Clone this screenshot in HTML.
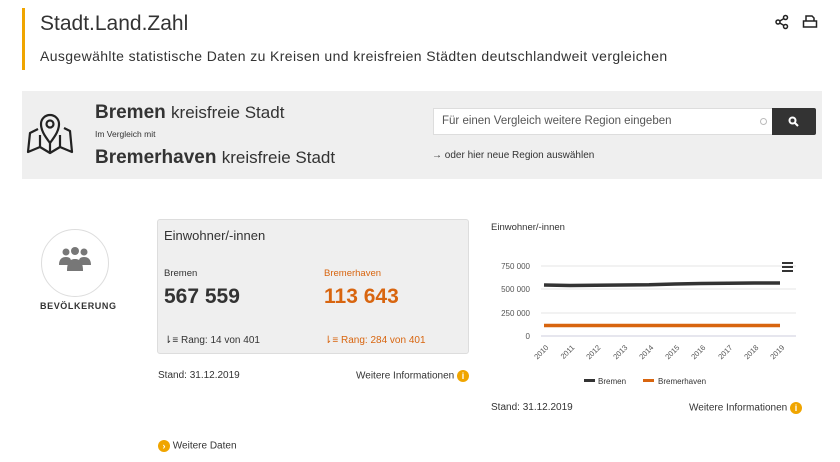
<!DOCTYPE html>
<html><head><meta charset="utf-8"><style>
*{margin:0;padding:0;box-sizing:border-box}
body{width:840px;height:462px;background:#fff;font-family:"Liberation Sans",sans-serif;color:#333;position:relative;overflow:hidden}
.a{position:absolute;white-space:nowrap}
.or{color:#d8650f}
.ic{display:inline-block;width:12px;height:12px;border-radius:50%;background:#f0a500;color:#fff;font-size:9px;font-weight:bold;text-align:center;line-height:12px;vertical-align:middle}
</style></head><body>
<div class="a" style="left:22px;top:8px;width:3px;height:62px;background:#f0a500"></div>
<div class="a" style="left:40px;top:12px;font-size:21px;color:#333">Stadt.Land.Zahl</div>
<div class="a" style="left:40px;top:48px;font-size:14px;color:#333;letter-spacing:0.38px">Ausgewählte statistische Daten zu Kreisen und kreisfreien Städten deutschlandweit vergleichen</div>
<svg class="a" style="left:774px;top:14px" width="16" height="16" viewBox="0 0 16 16" fill="none" stroke="#222" stroke-width="1.5"><circle cx="11.5" cy="3.5" r="2"/><circle cx="4" cy="8" r="2"/><circle cx="11.5" cy="12.5" r="2"/><path d="M5.8 7l4-2.4M5.8 9l4 2.4"/></svg>
<svg class="a" style="left:802px;top:14px" width="16" height="16" viewBox="0 0 16 16" fill="none" stroke="#222" stroke-width="1.5"><path d="M4 7V2h6l2 2v3M1.5 7h13v6h-13z"/></svg>

<div class="a" style="left:22px;top:91px;width:800px;height:88px;background:#efefef"></div>
<svg class="a" style="left:26px;top:111px" width="50" height="46" viewBox="0 0 50 46" fill="none" stroke="#222" stroke-width="2.2" stroke-linejoin="round"><path d="M12 18L4 22 2 41 14 36 24 42 34 36 46 41 44 20 38 17"/><path d="M14 36V24M34 36V24M24 42V30"/><path d="M24 32C18 24 15 19 15 13a9 9 0 0118 0c0 6-3 11-9 19z"/><circle cx="24" cy="13" r="3.5"/></svg>
<div class="a" style="left:95px;top:102px;font-size:19px;color:#333"><b>Bremen</b> <span style="font-size:17px">kreisfreie Stadt</span></div>
<div class="a" style="left:95px;top:129px;font-size:8.5px">Im Vergleich mit</div>
<div class="a" style="left:95px;top:147px;font-size:19px;color:#333"><b>Bremerhaven</b> <span style="font-size:17px">kreisfreie Stadt</span></div>
<div class="a" style="left:433px;top:108px;width:340px;height:27px;background:#fff;border:1px solid #ddd;border-right:none"></div>
<div class="a" style="left:442px;top:115px;font-size:11.5px;color:#555">Für einen Vergleich weitere Region eingeben</div>
<div class="a" style="left:760px;top:118px;width:7px;height:7px;border:1px solid #bbb;border-radius:50%"></div>
<div class="a" style="left:772px;top:108px;width:44px;height:27px;background:#333;border-radius:0 2px 2px 0"></div>
<svg class="a" style="left:788px;top:116px" width="11" height="11" viewBox="0 0 11 11" fill="none" stroke="#fff" stroke-width="2"><circle cx="4.5" cy="4.5" r="3"/><path d="M7 7l3 3"/></svg>
<div class="a" style="left:432px;top:150px;font-size:10px;color:#333">→ oder hier neue Region auswählen</div>

<div class="a" style="left:41px;top:229px;width:68px;height:68px;border:1px solid #ddd;border-radius:50%"></div>
<svg class="a" style="left:57px;top:247px" width="36" height="26" viewBox="0 0 36 26" fill="#777"><circle cx="9" cy="5" r="3.5"/><circle cx="27" cy="5" r="3.5"/><circle cx="18" cy="4" r="4"/><path d="M2 18c0-6 3-8 7-8s5 2 5 4v4zM34 18c0-6-3-8-7-8s-5 2-5 4v4z"/><path d="M10 24c0-9 3-12 8-12s8 3 8 12z"/></svg>
<div class="a" style="left:40px;top:301px;font-size:9px;font-weight:bold;letter-spacing:0.6px">BEVÖLKERUNG</div>

<div class="a" style="left:157px;top:219px;width:312px;height:135px;background:#efefef;border:1px solid #ddd;border-radius:3px"></div>
<div class="a" style="left:164px;top:228px;font-size:13px">Einwohner/-innen</div>
<div class="a" style="left:164px;top:268px;font-size:9.5px">Bremen</div>
<div class="a" style="left:164px;top:285px;font-size:21px;font-weight:bold">567 559</div>
<div class="a" style="left:324px;top:268px;font-size:9.5px" ><span class="or">Bremerhaven</span></div>
<div class="a or" style="left:324px;top:285px;font-size:21px;font-weight:bold">113 643</div>
<div class="a" style="left:164px;top:335px;font-size:10px">⇂≡ Rang: 14 von 401</div>
<div class="a or" style="left:324px;top:335px;font-size:10px">⇂≡ Rang: 284 von 401</div>
<div class="a" style="left:158px;top:370px;font-size:10px">Stand: 31.12.2019</div>
<div class="a" style="left:356px;top:370px;font-size:10px">Weitere Informationen <span class="ic">i</span></div>
<div class="a" style="left:158px;top:440px;font-size:10px"><span class="ic">›</span> Weitere Daten</div>

<div class="a" style="left:491px;top:222px;font-size:9.5px">Einwohner/-innen</div>
<svg class="a" style="left:490px;top:255px" width="320" height="135" viewBox="490 255 320 135" font-family="Liberation Sans" font-size="8" fill="#555">
<g stroke="#e6e6e6"><line x1="541" y1="266" x2="796" y2="266"/><line x1="541" y1="289" x2="796" y2="289"/><line x1="541" y1="313" x2="796" y2="313"/><line x1="541" y1="336" x2="796" y2="336" stroke="#ccd"/></g>
<g text-anchor="end"><text x="530" y="269">750 000</text><text x="530" y="292">500 000</text><text x="530" y="316">250 000</text><text x="530" y="339">0</text></g>
<polyline points="544,285 570,285.5 596,285.3 623,285 649,284.8 675,284 701,283.5 728,283.3 754,283 780,283" fill="none" stroke="#333" stroke-width="3.5"/>
<polyline points="544,325.5 780,325.5" fill="none" stroke="#d8650f" stroke-width="3.5"/>
<g stroke="#333" stroke-width="2"><line x1="782" y1="263" x2="793" y2="263"/><line x1="782" y1="267" x2="793" y2="267"/><line x1="782" y1="271" x2="793" y2="271"/></g>
<g text-anchor="end" font-size="7.5">
<text transform="translate(549,348) rotate(-45)">2010</text><text transform="translate(575,348) rotate(-45)">2011</text><text transform="translate(601,348) rotate(-45)">2012</text><text transform="translate(628,348) rotate(-45)">2013</text><text transform="translate(654,348) rotate(-45)">2014</text><text transform="translate(680,348) rotate(-45)">2015</text><text transform="translate(706,348) rotate(-45)">2016</text><text transform="translate(733,348) rotate(-45)">2017</text><text transform="translate(759,348) rotate(-45)">2018</text><text transform="translate(785,348) rotate(-45)">2019</text></g>
<rect x="584" y="379" width="11" height="3" fill="#333"/><text x="598" y="384" fill="#333">Bremen</text>
<rect x="643" y="379" width="11" height="3" fill="#d8650f"/><text x="658" y="384" fill="#333">Bremerhaven</text>
</svg>
<div class="a" style="left:491px;top:402px;font-size:10px">Stand: 31.12.2019</div>
<div class="a" style="left:689px;top:402px;font-size:10px">Weitere Informationen <span class="ic">i</span></div>
</body></html>
